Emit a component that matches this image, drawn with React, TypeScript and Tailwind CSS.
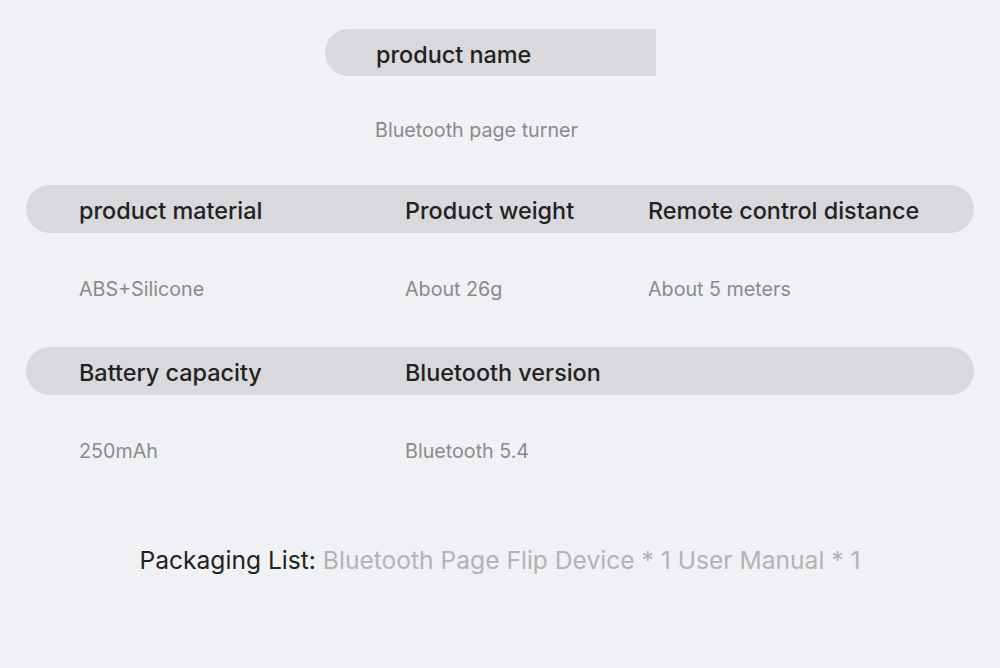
import React from "react";

const font = { fontFamily: "Inter, 'Noto Sans', sans-serif" };

// Spec rows: header labels on a rounded pill, values underneath
const ROWS = [
  {
    labels: ["product material", "Product weight", "Remote control distance"],
    values: ["ABS+Silicone", "About 26g", "About 5 meters"],
  },
  {
    labels: ["Battery capacity", "Bluetooth version", ""],
    values: ["250mAh", "Bluetooth 5.4", ""],
  },
];

function SpecRow({ labels, values }: { labels: string[]; values: string[] }) {
  return (
    <div className="flex flex-col">
      <div className="mx-[26px] h-[48px] rounded-full bg-[#d9d9dd] pl-[53px] pt-[3px] grid grid-cols-[326px_243px_1fr] items-center">
        {labels.map((l, i) => (
          <span key={i} className="text-[23.4px] font-medium text-[#222]">
            {l}
          </span>
        ))}
      </div>
      <div className="mx-[26px] h-[110px] pl-[53px] pt-[3px] grid grid-cols-[326px_243px_1fr] items-center">
        {values.map((v, i) => (
          <span key={i} className="text-[19.7px] text-[#8a8a8a]">
            {v}
          </span>
        ))}
      </div>
    </div>
  );
}

export default function App() {
  return (
    <div className="w-[1000px] h-[668px] bg-[#f0f1f5] flex flex-col pt-[29px]" style={font}>
      {/* Product name */}
      <div className="ml-[325px] w-[331px] h-[47px] bg-[#d9d9dd] rounded-l-full flex items-center pl-[51px] pt-[5px]">
        <span className="text-[23.4px] font-medium text-[#222]">product name</span>
      </div>
      <div className="ml-[375px] h-[109px] flex items-center pt-[1px]">
        <span className="text-[19.7px] text-[#8a8a8a]">Bluetooth page turner</span>
      </div>

      <div className="flex flex-col gap-[4px]">
        {ROWS.map((r, i) => (
          <SpecRow key={i} labels={r.labels} values={r.values} />
        ))}
      </div>

      {/* Packaging list */}
      <div className="mt-[37px] flex justify-center">
        <p className="text-[24.6px]">
          <span className="text-[#222]">Packaging List: </span>
          <span className="text-[#b3b3b3]">Bluetooth Page Flip Device * 1 User Manual * 1</span>
        </p>
      </div>
    </div>
  );
}
